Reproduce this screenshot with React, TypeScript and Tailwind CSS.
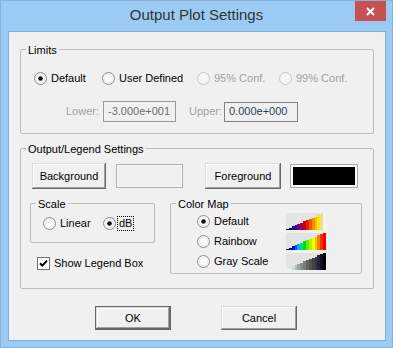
import React from "react";

const FONT = "font-['Liberation_Sans',Arial,sans-serif]";

function Radio({
  checked,
  disabled,
  label,
  focus,
}: {
  checked?: boolean;
  disabled?: boolean;
  label: string;
  focus?: boolean;
}) {
  return (
    <div className="flex items-center h-[13px]">
      <svg width="13" height="13" viewBox="0 0 13 13" className="shrink-0 block">
        <circle
          cx="6.5"
          cy="6.5"
          r="6"
          fill={disabled ? "#f4f4f4" : "#f7f7f7"}
          stroke={disabled ? "#c4c4c4" : "#8a8a8a"}
          strokeWidth="1"
        />
        <circle cx="6.5" cy="6.5" r="4.5" fill={disabled ? "#f4f4f4" : "#ececec"} />
        <circle cx="6.5" cy="6.5" r="3.5" fill={disabled ? "#f6f6f6" : "#fafafa"} />
        {checked && <circle cx="6.5" cy="6.5" r="2.3" fill="#111111" />}
      </svg>
      {focus ? (
        <span className="ml-[2px] px-[1px] leading-[13px] outline outline-1 outline-dotted outline-black">{label}</span>
      ) : (
        <span className={disabled ? "ml-[4px] leading-[13px] text-[#a0a0a0]" : "ml-[4px] leading-[13px] text-black"}>
          {label}
        </span>
      )}
    </div>
  );
}

function Group({
  label,
  className,
  children,
}: {
  label: string;
  className: string;
  children?: React.ReactNode;
}) {
  return (
    <div className={`relative border border-[#bcbcbc] rounded-[2px] ${className}`}>
      <span className="absolute left-[5px] -top-[7px] px-[2px] bg-[#f0f0f0] leading-[14px] text-black whitespace-nowrap">
        {label}
      </span>
      {children}
    </div>
  );
}

function Btn({ label, className }: { label: string; className: string }) {
  return (
    <div
      className={`flex items-center justify-center bg-[#f0f0f0] text-black shadow-[inset_-1px_-1px_0_#696969,inset_1px_1px_0_#dcdcdc,inset_-2px_-2px_0_#a0a0a0,inset_2px_2px_0_#ffffff] ${className}`}
    >
      {label}
    </div>
  );
}

function Bar({ colors }: { colors: string[] }) {
  const n = colors.length;
  const w = 40 / n;
  return (
    <svg width="40" height="17" viewBox="0 0 40 17" className="block">
      <rect width="40" height="17" fill="#e3e3e3" />
      {colors.map((c, i) => {
        const h = Math.max(1, Math.round((17 * (i + 1)) / n));
        return (
          <rect
            key={i}
            x={i * w}
            y={17 - h}
            width={w + 0.05}
            height={h}
            fill={c}
            shapeRendering="crispEdges"
          />
        );
      })}
    </svg>
  );
}

const DEFAULT_MAP = [
  "#000050",
  "#000080",
  "#1010a8",
  "#3a0898",
  "#680878",
  "#980850",
  "#c80010",
  "#e82000",
  "#f05800",
  "#f09000",
  "#f8c000",
  "#f8e800",
  "#e8e090",
  "#f6f6e8",
];
const RAINBOW_MAP = [
  "#000070",
  "#0000b0",
  "#0000f0",
  "#0058f8",
  "#00b0f0",
  "#00d8a0",
  "#00e000",
  "#58f000",
  "#b8f000",
  "#f8f800",
  "#f8c000",
  "#f88000",
  "#f83000",
  "#f00000",
];
const GRAY_MAP = [
  "#f2f8f2",
  "#dcefe8",
  "#c4e0d8",
  "#b4c0bc",
  "#a4a4a4",
  "#8c8c8c",
  "#7a7a7a",
  "#646464",
  "#545444",
  "#44443a",
  "#343450",
  "#24243c",
  "#101020",
  "#000000",
];

export default function App() {
  return (
    <div
      className={`w-[393px] h-[348px] bg-[#9bcbf3] border border-[#84b3de] flex flex-col ${FONT} text-[11px] text-black`}
    >
      {/* title bar */}
      <div className="relative h-[30px] flex items-center justify-center">
        <span className="text-[15px] leading-[20px] text-[#333333] -mt-[2px]">Output Plot Settings</span>
        <div className="absolute right-[6px] top-0 w-[31px] h-[20px] bg-[#c75050] flex items-center justify-center">
          <svg width="9" height="9" viewBox="0 0 9 9" className="block">
            <path d="M1 1L8 8M8 1L1 8" stroke="#ffffff" strokeWidth="2" />
          </svg>
        </div>
      </div>

      {/* client */}
      <div className="ml-[7px] w-[378px] h-[310px] border border-[#7fb0dc] bg-[#f0f0f0] pl-[11px] flex flex-col">
        <Group label="Limits" className="mt-[17px] w-[354px] h-[85px]">
          <div className="flex mt-[22px] pl-[13px]">
            <div className="w-[68px]">
              <Radio checked label="Default" />
            </div>
            <div className="w-[95px]">
              <Radio label="User Defined" />
            </div>
            <div className="w-[82px]">
              <Radio disabled label="95% Conf." />
            </div>
            <Radio disabled label="99% Conf." />
          </div>
          <div className="flex items-center mt-[16px] pl-[45px]">
            <span className="w-[37px] text-[#a0a0a0]">Lower:</span>
            <div className="w-[73px] h-[21px] border border-[#9a9a9a] flex items-center pl-[4px] text-[#6d6d6d]">
              -3.000e+001
            </div>
            <span className="w-[48px] text-right pr-[2px] text-[#a0a0a0]">Upper:</span>
            <div className="w-[74px] h-[20px] border border-[#828282] flex items-center pl-[4px] text-[#2f3d55]">
              0.000e+000
            </div>
          </div>
        </Group>

        <Group label="Output/Legend Settings" className="mt-[14px] w-[354px] h-[141px]">
          <div className="flex items-center mt-[14px] pl-[11px]">
            <Btn label="Background" className="w-[74px] h-[26px]" />
            <div className="ml-[10px] w-[67px] h-[24px] border border-[#b0b0b0] p-[1px] bg-[#fafafa]">
              <div className="w-full h-full bg-[#f0f0f0]" />
            </div>
            <Btn label="Foreground" className="ml-[22px] w-[76px] h-[26px]" />
            <div className="ml-[9px] w-[68px] h-[24px] border border-[#a8a8a8] p-[2px] bg-[#fafafa]">
              <div className="w-full h-full bg-black" />
            </div>
          </div>

          <div className="flex mt-[14px] pl-[9px]">
            <div className="flex flex-col">
              <Group label="Scale" className="w-[125px] h-[40px]">
                <div className="flex mt-[13px] pl-[12px]">
                  <div className="w-[60px]">
                    <Radio label="Linear" />
                  </div>
                  <Radio checked focus label="dB" />
                </div>
              </Group>
              <div className="flex items-center mt-[14px] pl-[7px]">
                <div className="w-[13px] h-[13px] border border-[#707070] bg-white flex items-center justify-center">
                  <svg width="11" height="11" viewBox="0 0 11 11" className="block">
                    <path d="M2 5.2L4.3 7.6L9 2.6" stroke="#000000" strokeWidth="2" fill="none" />
                  </svg>
                </div>
                <span className="ml-[4px] leading-[13px]">Show Legend Box</span>
              </div>
            </div>

            <Group label="Color Map" className="ml-[15px] w-[192px] h-[71px]">
              <div className="flex flex-col mt-[7px] pl-[26px]">
                <div className="flex items-center h-[20px]">
                  <div className="w-[89px]">
                    <Radio checked label="Default" />
                  </div>
                  <Bar colors={DEFAULT_MAP} />
                </div>
                <div className="flex items-center h-[20px]">
                  <div className="w-[89px]">
                    <Radio label="Rainbow" />
                  </div>
                  <Bar colors={RAINBOW_MAP} />
                </div>
                <div className="flex items-center h-[20px]">
                  <div className="w-[89px]">
                    <Radio label="Gray Scale" />
                  </div>
                  <Bar colors={GRAY_MAP} />
                </div>
              </div>
            </Group>
          </div>
        </Group>

        <div className="flex mt-[17px] pl-[75px]">
          <Btn label="OK" className="w-[76px] h-[24px] border border-[#646464]" />
          <Btn label="Cancel" className="ml-[50px] w-[76px] h-[24px]" />
        </div>
      </div>
    </div>
  );
}
